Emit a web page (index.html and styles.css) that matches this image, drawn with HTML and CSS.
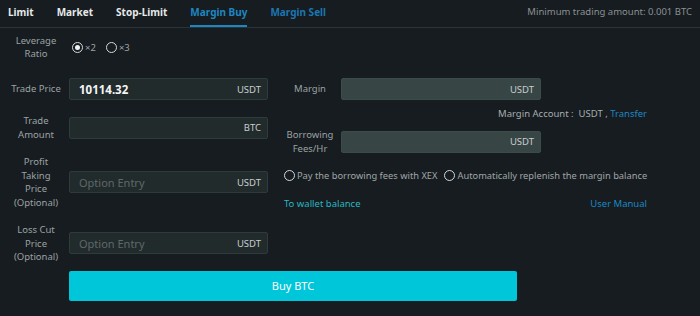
FILE: index.html
```html
<!DOCTYPE html>
<html lang="en">
<head>
  <meta charset="UTF-8" />
  <meta name="viewport" content="width=device-width, initial-scale=1.0"/>
  <title>Margin Buy</title>
  <link rel="stylesheet" href="styles.css">
</head>
<body>
  <div class="trade">
    <header class="tabs">
      <nav>
        <a href="#">Limit</a>
        <a href="#">Market</a>
        <a href="#">Stop-Limit</a>
        <a href="#" class="active">Margin Buy</a>
        <a href="#" class="sell">Margin Sell</a>
      </nav>
      <span class="min-amount">Minimum trading amount: 0.001 BTC</span>
    </header>

    <div class="row lev-row">
      <label class="lbl">Leverage Ratio</label>
      <div class="radios">
        <span class="radio checked"></span><span class="opt">×2</span>
        <span class="radio"></span><span class="opt">×3</span>
      </div>
    </div>

    <div class="body">
      <div class="col left">
        <div class="row">
          <label class="lbl">Trade Price</label>
          <div class="field"><span class="val">10114.32</span><span class="unit">USDT</span></div>
        </div>
        <div class="row">
          <label class="lbl">Trade<br>Amount</label>
          <div class="field"><span class="val"></span><span class="unit">BTC</span></div>
        </div>
        <div class="row">
          <label class="lbl">Profit<br>Taking<br>Price<br>(Optional)</label>
          <div class="field"><span class="ph">Option Entry</span><span class="unit">USDT</span></div>
        </div>
        <div class="row">
          <label class="lbl">Loss Cut<br>Price<br>(Optional)</label>
          <div class="field"><span class="ph">Option Entry</span><span class="unit">USDT</span></div>
        </div>
      </div>

      <div class="col right">
        <div class="row">
          <label class="lbl">Margin</label>
          <div class="field light"><span class="val"></span><span class="unit">USDT</span></div>
        </div>
        <div class="account">Margin Account :&nbsp; USDT , <a href="#">Transfer</a></div>
        <div class="row borrow">
          <label class="lbl">Borrowing<br>Fees/Hr</label>
          <div class="field light"><span class="val"></span><span class="unit">USDT</span></div>
        </div>
        <div class="checks">
          <span class="radio"></span><span>Pay the borrowing fees with XEX</span>
          <span class="radio second"></span><span>Automatically replenish the margin balance</span>
        </div>
        <div class="links">
          <a href="#" class="wallet">To wallet balance</a>
          <a href="#" class="manual">User Manual</a>
        </div>
      </div>
    </div>

    <div class="row submit">
      <span class="lbl"></span>
      <button class="btn">Buy BTC</button>
    </div>
  </div>
</body>
</html>
```

FILE: styles.css
```css
:root {
  --bg: #161c1f;
  --line: #2a3336;
  --field: #222b2c;
  --field-border: #2e3a3b;
  --field-light: #374545;
  --label: #9ca2a5;
  --text: #c9cdcf;
  --blue: #1d87c4;
  --teal: #2bb6c2;
  --btn: #00c6da;
}

* {
  box-sizing: border-box;
  font-family: 'Noto Sans', 'DejaVu Sans', sans-serif;
}

body {
  margin: 0;
  background: var(--bg);
  color: var(--text);
  font-size: 10px;
}

a {
  text-decoration: none;
}

.trade {
  width: 700px;
  height: 316px;
}

.tabs {
  display: flex;
  justify-content: space-between;
  align-items: stretch;
  height: 28px;
  padding: 0 8px;
  border-bottom: 1px solid var(--line);
}

.tabs nav {
  display: flex;
  gap: 23px;
}

.tabs nav a {
  color: #e6e9ea;
  font-size: 10px;
  font-weight: 700;
  line-height: 24px;
  border-bottom: 2px solid transparent;
}

.tabs nav a.active {
  color: var(--blue);
  border-bottom-color: var(--blue);
}

.tabs nav a.sell {
  color: #1b76b3;
}

.min-amount {
  color: #8b9194;
  font-size: 9.5px;
  line-height: 24px;
}

.row {
  display: flex;
  align-items: center;
}

.lbl {
  width: 56px;
  margin-right: 5px;
  text-align: center;
  color: var(--label);
  font-size: 9.5px;
  line-height: 13.5px;
  flex-shrink: 0;
}

.lev-row {
  margin-top: 7px;
  padding-left: 8px;
}

.lev-row .lbl {
  line-height: 12.5px;
}

.radios {
  display: flex;
  align-items: center;
  margin-left: 3px;
}

.radio {
  width: 11px;
  height: 11px;
  border: 1.5px solid #d6d9da;
  border-radius: 50%;
  display: inline-flex;
  align-items: center;
  justify-content: center;
  flex-shrink: 0;
}

.radio.checked::after {
  content: '';
  width: 5px;
  height: 5px;
  border-radius: 50%;
  background: #f2f4f4;
}

.opt {
  color: #9ca2a5;
  margin: 0 10px 0 2px;
  font-size: 9.5px;
}

.body {
  display: flex;
  gap: 16px;
  margin-top: 18px;
  padding-left: 8px;
}

.col {
  display: flex;
  flex-direction: column;
}

.left {
  width: 260px;
  gap: 14px;
}

.right {
  width: 363px;
}

.field {
  flex: 1;
  height: 22px;
  display: flex;
  align-items: center;
  justify-content: space-between;
  padding: 0 6px 0 9px;
  background: var(--field);
  border: 1px solid var(--field-border);
  border-radius: 2px;
}

.field.light {
  flex: 0 0 200px;
  background: var(--field-light);
  border-color: #3b4a4a;
}

.val {
  color: #f4f6f6;
  font-weight: 700;
  font-size: 11.5px;
}

.ph {
  color: #5f686a;
  font-size: 11px;
}

.unit {
  color: var(--text);
  font-size: 9.5px;
}

.right .lbl {
  width: 52px;
}

.account {
  text-align: right;
  color: #a7adaf;
  font-size: 9.5px;
  line-height: 13px;
  margin-top: 7px;
}

.account a {
  color: var(--blue);
}

.borrow {
  margin-top: 8px;
}

.checks {
  display: flex;
  align-items: center;
  margin-top: 14px;
  color: #a0a6a8;
  font-size: 9.3px;
  white-space: nowrap;
}

.checks .radio {
  margin-right: 2px;
}

.checks .radio.second {
  margin-left: 7px;
}

.links {
  display: flex;
  justify-content: space-between;
  margin-top: 15px;
  font-size: 9.5px;
}

.wallet {
  color: var(--teal);
}

.manual {
  color: var(--blue);
}

.submit {
  margin-top: 7px;
  padding-left: 8px;
}

.btn {
  width: 448px;
  height: 30px;
  background: var(--btn);
  color: #fff;
  border: none;
  border-radius: 2px;
  font-size: 11px;
  cursor: pointer;
}
```
